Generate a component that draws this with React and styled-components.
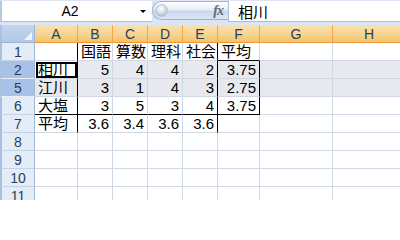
import React from 'react';
import styled, { createGlobalStyle } from 'styled-components';

const GlobalStyle = createGlobalStyle`
  html, body {
    margin: 0;
    padding: 0;
    background: #fff;
    overflow: hidden;
  }
  body {
    font-family: "Liberation Sans", "Noto Sans CJK JP", sans-serif;
  }
`;

const Window = styled.div`
  width: 400px;
  height: 200px;
  overflow: hidden;
  display: flex;
  flex-direction: column;
  background: #fff;
`;

const FormulaBar = styled.div`
  flex: none;
  height: 25px;
  box-sizing: border-box;
  padding: 1px 0 3px 0;
  background: #dbe5f3;
  display: flex;
`;

const NameBox = styled.div`
  width: 152px;
  flex: none;
  display: flex;
  align-items: center;
  background: #fff;
  border-bottom: 1px solid #a9bedb;
  border-left: 2px solid #b6c9e4;
  box-sizing: border-box;
`;

const NameText = styled.span`
  flex: 1;
  text-align: center;
  font-size: 14px;
  color: #000;
  padding-left: 2px;
`;

const DropArrow = styled.span`
  width: 0;
  height: 0;
  margin: 1px 6px 0 4px;
  border-left: 3px solid transparent;
  border-right: 3px solid transparent;
  border-top: 3px solid #000;
`;

const Capsule = styled.div`
  width: 76px;
  flex: none;
  height: 19px;
  box-sizing: border-box;
  display: flex;
  align-items: center;
  justify-content: space-between;
  border: 1px solid #9bb3d6;
  border-right: none;
  border-radius: 10px 0 0 10px;
  background: linear-gradient(#fdfeff 0%, #e7eef8 45%, #cad9ee 55%, #dbe6f5 100%);
`;

const Knob = styled.span`
  width: 13px;
  height: 13px;
  margin-left: 2px;
  border-radius: 50%;
  background: radial-gradient(circle at 45% 35%, #ffffff 0%, #dde2ea 40%, #9aa4b3 100%);
  border: 1px solid #b9c3d2;
  box-sizing: border-box;
`;

const Fx = styled.span`
  font-family: "Liberation Serif", "DejaVu Serif", serif;
  font-style: italic;
  font-weight: bold;
  font-size: 14px;
  color: #5f6b7a;
  margin-right: 5px;
  letter-spacing: -1px;
`;

const FormulaInput = styled.div`
  flex: 1;
  display: flex;
  align-items: center;
  padding-left: 9px;
  background: #fff;
  border-left: 1px solid #a9bedb;
  border-bottom: 1px solid #a9bedb;
  font-size: 15px;
  color: #000;
`;

const Sheet = styled.div`
  display: grid;
  grid-template-columns: 35px 43px 35px 35px 35px 35px 42px 73px 73px;
  grid-auto-rows: 18px;
`;

const Corner = styled.div`
  position: relative;
  box-sizing: border-box;
  border-left: 2px solid #a9c0e0;
  border-right: 1px solid #9eb6ce;
  border-bottom: 1px solid #9eb6ce;
  background: linear-gradient(#c3d5ed, #b2c8e6);

  &::after {
    content: "";
    position: absolute;
    right: 2px;
    bottom: 2px;
    width: 0;
    height: 0;
    border-left: 8px solid transparent;
    border-bottom: 8px solid #f2f6fb;
  }
`;

const ColHeader = styled.div`
  box-sizing: border-box;
  display: flex;
  align-items: center;
  justify-content: center;
  border-right: 1px solid #f2a64f;
  border-bottom: 1px solid #f29436;
  background: linear-gradient(#fae0ae 0%, #f8d596 50%, #f2c466 100%);
  font-size: 14px;
  color: #27405a;
`;

const RowHeader = styled.div`
  box-sizing: border-box;
  display: flex;
  align-items: center;
  justify-content: center;
  border-left: 2px solid #a9c0e0;
  border-right: 1px solid #9eb6ce;
  border-bottom: 1px solid ${p => (p.$sel ? '#e9eff8' : '#c6d3e5')};
  background: ${p => (p.$sel ? '#a8c2e7' : '#e4ecf7')};
  font-size: 14px;
  color: #27405a;
`;

const Cell = styled.div`
  box-sizing: border-box;
  padding: 0 3px;
  border-right: 1px solid ${p => p.$br};
  border-bottom: 1px solid ${p => p.$bb};
  background: ${p => (p.$sel && !p.$active ? '#e8e9ee' : '#fff')};
  text-align: ${p => p.$align};
  font-size: 15px;
  line-height: 17px;
  color: #000;
  white-space: nowrap;
  ${p => p.$active && 'outline: 2px solid #000; outline-offset: -3px;'}
`;

const COLS = ['A', 'B', 'C', 'D', 'E', 'F', 'G', 'H'];

const ROWS = [
  { n: 1, cells: ['', '国語', '算数', '理科', '社会', '平均'] },
  { n: 2, sel: true, cells: ['相川', '5', '4', '4', '2', '3.75'] },
  { n: 5, sel: true, cells: ['江川', '3', '1', '4', '3', '2.75'] },
  { n: 6, cells: ['大塩', '3', '5', '3', '4', '3.75'] },
  { n: 7, cells: ['平均', '3.6', '3.4', '3.6', '3.6', ''] },
  { n: 8, cells: [] },
  { n: 9, cells: [] },
  { n: 10, cells: [] },
  { n: 11, cells: [] },
];

const GRID = '#d0d7e5';
const LINE = '#000';
const inTable = n => n >= 1 && n <= 7;

const rightColor = (n, c) => {
  if ((c === 0 || c === 4) && inTable(n)) return LINE;
  if (c === 5 && n >= 2 && n <= 6) return LINE;
  return GRID;
};

const bottomColor = (n, c) => {
  if (n === 1 && c === 5) return LINE;
  if (n === 6 && c <= 5) return LINE;
  return GRID;
};

const isNumber = v => v !== '' && !isNaN(Number(v));

const App = () => {
  return (
    <Window>
      <GlobalStyle />
      <FormulaBar>
        <NameBox>
          <NameText>A2</NameText>
          <DropArrow />
        </NameBox>
        <Capsule>
          <Knob />
          <Fx>fx</Fx>
        </Capsule>
        <FormulaInput>相川</FormulaInput>
      </FormulaBar>
      <Sheet>
        <Corner />
        {COLS.map(c => (
          <ColHeader key={c}>{c}</ColHeader>
        ))}
        {ROWS.map(row => (
          <React.Fragment key={row.n}>
            <RowHeader $sel={row.sel}>{row.n}</RowHeader>
            {COLS.map((col, c) => {
              const v = row.cells[c] || '';
              return (
                <Cell
                  key={col}
                  $sel={row.sel}
                  $active={row.n === 2 && c === 0}
                  $br={rightColor(row.n, c)}
                  $bb={bottomColor(row.n, c)}
                  $align={isNumber(v) ? 'right' : 'left'}
                >
                  {v}
                </Cell>
              );
            })}
          </React.Fragment>
        ))}
      </Sheet>
    </Window>
  );
};

export default App;
